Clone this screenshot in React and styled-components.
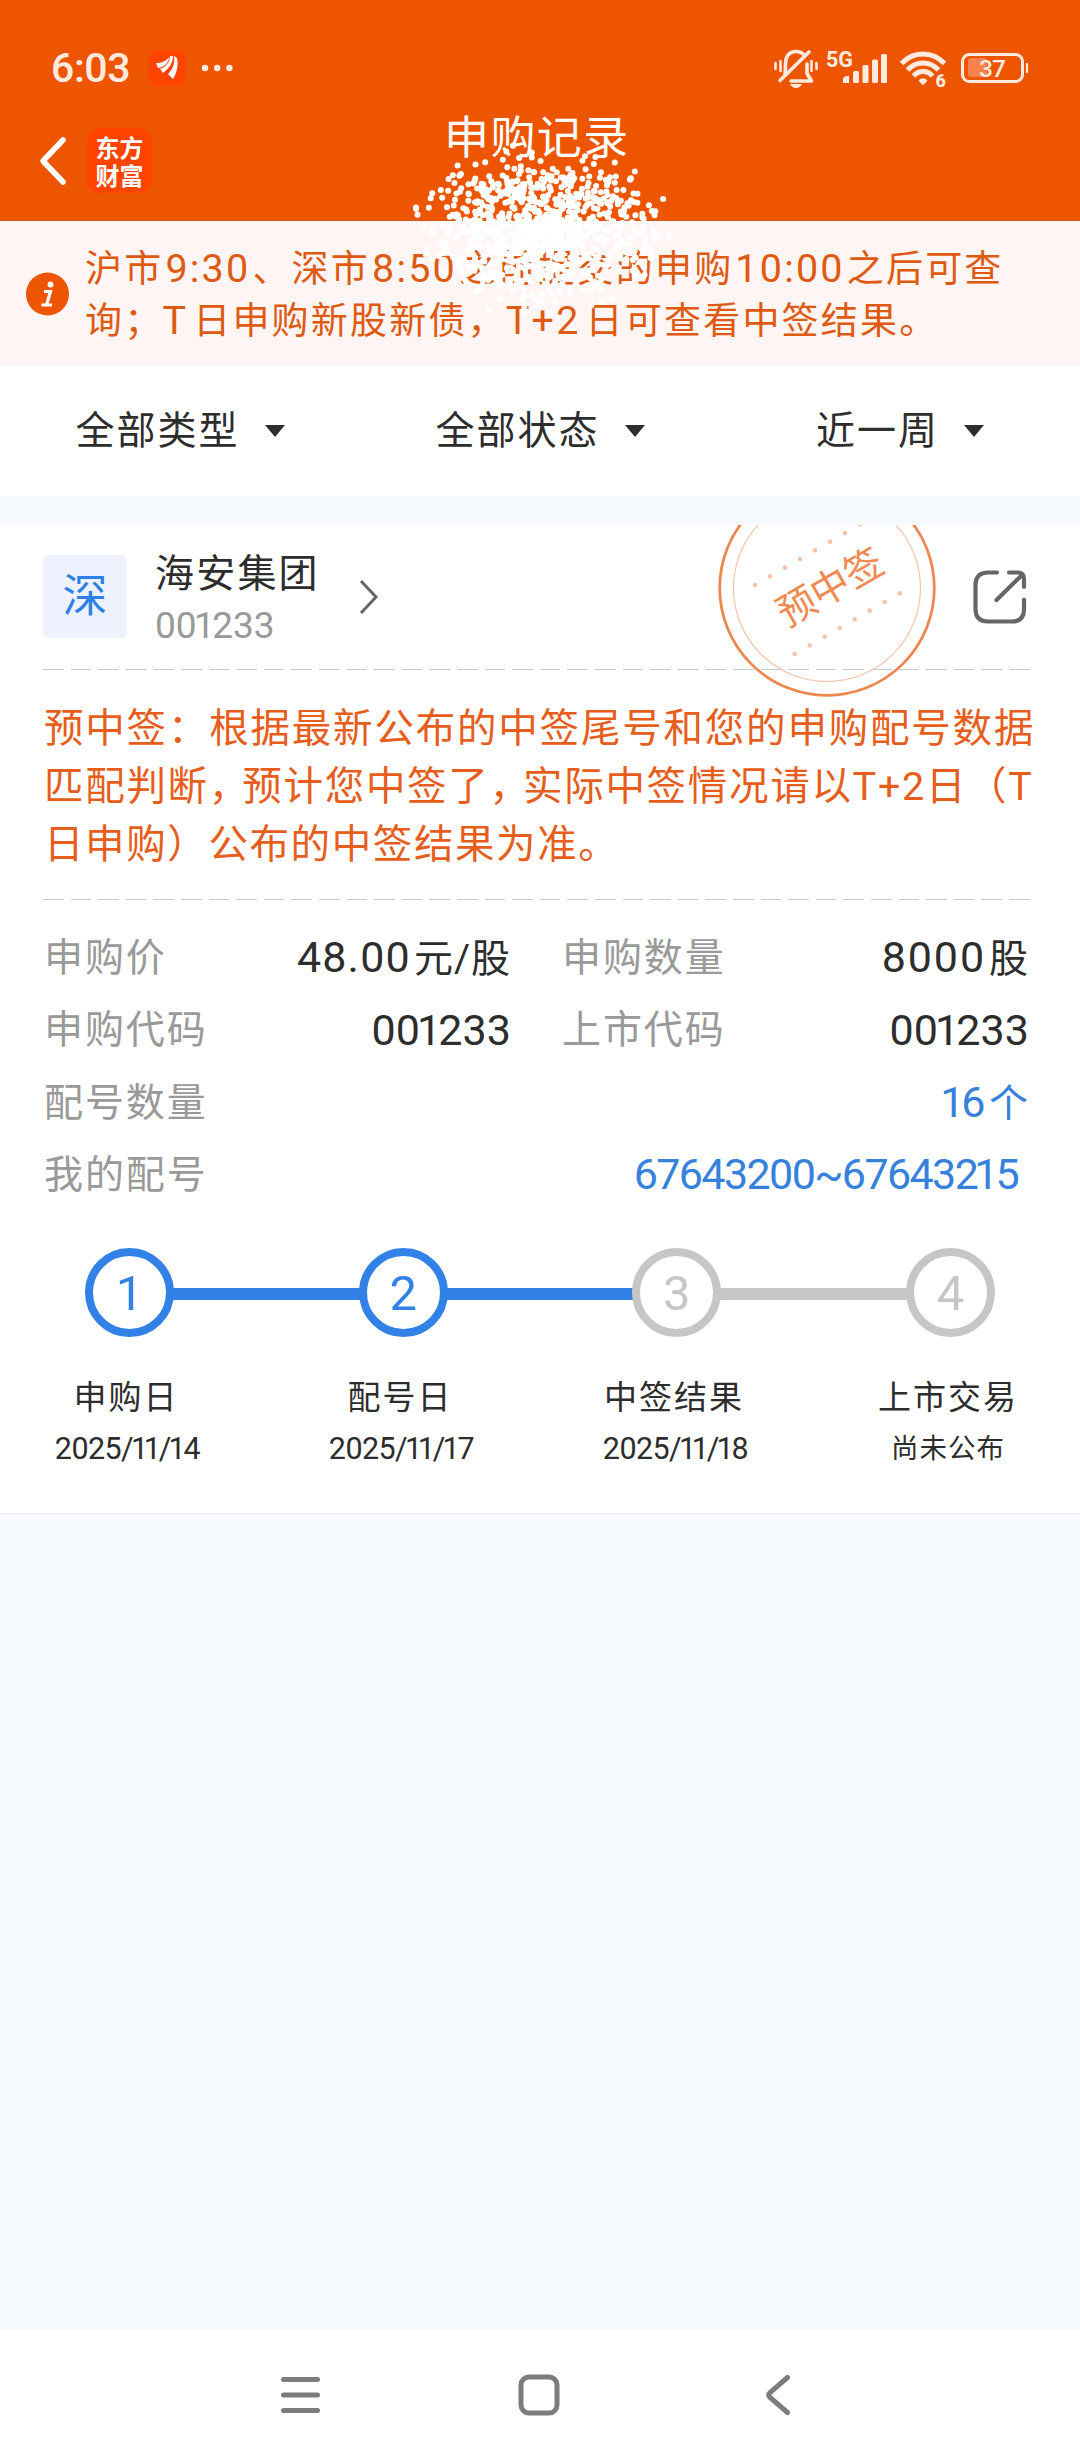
import React from 'react'
import styled, { createGlobalStyle, css } from 'styled-components'

const GlobalStyle = createGlobalStyle`
  * {
    box-sizing: border-box;
  }
  body {
    margin: 0;
    background: #f6faff;
    font-family: Roboto, 'Noto Sans CJK SC', sans-serif;
    line-height: 1.25;
    color: #2d2d2d;
  }
  svg {
    display: block;
    flex-shrink: 0;
  }
`

const centerItem = css`
  display: flex;
  align-items: center;
  justify-content: center;
`

const Page = styled.div`
  position: relative;
  display: flex;
  flex-direction: column;
  width: 1080px;
  height: 2460px;
  overflow: hidden;
`

/* header */
const Header = styled.header`
  height: 221px;
  padding-top: 40px;
  background: #ee5500;
  border-bottom: 1px solid #cf5a1c;
  color: #fff;
`

const StatusBar = styled.div`
  display: flex;
  align-items: center;
  height: 56px;
  padding: 0 52px 0 51px;
  color: #ffeadf;
`

const Clock = styled.div`
  width: 98px;
  font-size: 41px;
  font-weight: 500;
  letter-spacing: -0.4px;
  line-height: 56px;
`

const AppBadge = styled.div`
  ${centerItem};
  width: 36px;
  height: 36px;
  margin-right: 16px;
  border-radius: 7px;
  background: #ff4400;
`

const StatusRight = styled.div`
  display: flex;
  align-items: center;
  margin-left: auto;
`

const TitleBar = styled.div`
  display: flex;
  align-items: flex-start;
  height: 124px;
  padding: 32px 0 0 38px;
`

const BackIcon = styled.svg`
  margin: 8px 19px 0 0;
`

const Logo = styled.div`
  ${centerItem};
  flex-direction: column;
  width: 65px;
  height: 65px;
  border-radius: 13px;
  background: #ff4400;
  font-family: 'Noto Sans CJK SC', sans-serif;
  font-size: 24px;
  font-weight: 700;
  line-height: 28px;
`

const Title = styled.h1`
  width: 190px;
  margin: -16px 0 0 292px;
  font-size: 45px;
  font-weight: 400;
  letter-spacing: 1.4px;
  line-height: 54px;
  white-space: nowrap;
`

const Sparkle = styled.svg`
  position: absolute;
  top: 140px;
  left: 396px;
`

/* notice */
const Notice = styled.section`
  display: flex;
  align-items: center;
  height: 145px;
  padding-left: 26px;
  background: #fff5f5;
`

const NoticeText = styled.div`
  margin-left: 16px;
  padding-top: 4px;
  font-size: 37px;
  letter-spacing: 2.2px;
  line-height: 51.5px;
  color: #de5a10;
`

const Latin = styled.span`
  margin: 0 2px;
  font-size: 39.5px;
  line-height: 1;
`

const LatinLetters = styled(Latin)`
  margin: 0 5px 0 -1px;
`

const Line = styled.div`
  white-space: nowrap;
  letter-spacing: ${(props) => props.$track};
`

const Tight = styled.span`
  letter-spacing: -6px;
`

/* filters */
const Filters = styled.nav`
  display: grid;
  grid-template-columns: repeat(3, 1fr);
  height: 130px;
  background: #fff;
`

const Filter = styled.div`
  ${centerItem};
  gap: 25px;
  font-size: 39px;
  letter-spacing: 2px;
`

const Caret = styled.span`
  border: 10px solid transparent;
  border-top: 12px solid #2d2d2d;
  border-bottom: 0;
`

/* card */
const Card = styled.main`
  position: relative;
  height: 989px;
  margin-top: 29px;
  padding: 0 50px 0 43px;
  overflow: hidden;
  background: #fff;
  border-bottom: 1px solid #ececf0;
`

const StockHead = styled.div`
  display: flex;
  align-items: center;
  height: 144px;
`

const Market = styled.div`
  ${centerItem};
  width: 84px;
  height: 83px;
  margin-top: -1px;
  padding-top: 2px;
  border-radius: 6px;
  background: #edf2fe;
  color: #2f80e4;
  font-size: 45px;
`

const StockName = styled.div`
  width: 204px;
  margin: 3px 0 0 28px;
  font-size: 39px;
  letter-spacing: 2.2px;
  line-height: 54px;
`

const StockCode = styled.div`
  font-size: 37px;
  letter-spacing: 0;
  line-height: 49px;
  color: #999;
`

const ShareIcon = styled.svg`
  margin: 0 3px 0 auto;
`

const Stamp = styled.svg`
  position: absolute;
  top: -47px;
  left: 717px;
`

const Divider = styled.div`
  height: 1px;
  background: repeating-linear-gradient(90deg, #c9c9c9 0 20.6px, transparent 20.6px 27.6px);
`

const Tip = styled.div`
  height: 229px;
  padding: 30px 0 0 1px;
  font-size: 39.5px;
  line-height: 58px;
  color: #e65d1c;
`

const Details = styled.div`
  display: grid;
  grid-template-columns: 464px 464px;
  grid-auto-rows: 72.4px;
  column-gap: 54px;
  padding: 22px 0 0 1px;
`

const Detail = styled.div`
  display: flex;
  align-items: center;
  justify-content: space-between;
  grid-column: ${(props) => (props.$wide ? '1 / -1' : 'auto')};
  padding-right: ${(props) => props.$inset || 0}px;
`

const Label = styled.span`
  font-size: 39px;
  letter-spacing: 1.9px;
  color: #999;
`

const Value = styled.span`
  margin-right: -3px;
  font-size: 43px;
  letter-spacing: ${(props) => props.$track || 0}px;
  color: ${(props) => (props.$link ? '#3581dc' : '#2d2d2d')};
  small {
    margin-left: 3px;
    font-size: 39px;
    letter-spacing: 1px;
  }
`

const Ones = styled.span`
  margin: 0 0.07em 0 -0.07em;
  letter-spacing: -0.14em;
`

/* steps */
const Track = styled.div`
  display: flex;
  align-items: center;
  height: 89px;
  margin: 36px -8px 0 42px;
  padding-right: 43px;
`

const stepColor = (props) => (props.$done ? '#3181e6' : '#c6c6c6')

const Dot = styled.div`
  ${centerItem};
  width: 89px;
  height: 89px;
  padding-top: 3px;
  border: 8.5px solid ${stepColor};
  border-radius: 50%;
  color: ${stepColor};
  font-size: 49px;
`

const Bar = styled.div`
  flex: 1;
  height: 12px;
  margin: 3px -1px 0;
  background: ${stepColor};
`

const StepTexts = styled.div`
  display: flex;
  justify-content: space-between;
  margin: 36px -8px 0 -7px;
`

const StepText = styled.div`
  width: 180px;
  text-align: center;
`

const StepName = styled.div`
  font-size: 33px;
  letter-spacing: 2px;
  line-height: 50px;
  white-space: nowrap;
`

const StepDate = styled.div`
  padding-left: ${(props) => (props.$text ? 0 : 3)}px;
  font-size: ${(props) => (props.$text ? 27.5 : 30.5)}px;
  letter-spacing: ${(props) => (props.$text ? 1 : -0.6)}px;
  line-height: 51px;
  white-space: nowrap;
`

/* system navigation */
const NavBar = styled.footer`
  display: flex;
  align-items: center;
  height: 130px;
  margin-top: auto;
  padding: 0 289px 0 281px;
  justify-content: space-between;
  background: #fff;
`

const HomeIcon = styled.svg`
  margin-right: 7px;
`

// "1" is set narrower than the other figures
const Num = ({ children }) =>
  children.split(/(1+)/).map((part, i) => (i % 2 ? <Ones key={i}>{part}</Ones> : part))

const makeDots = (count) => {
  let seed = 7
  const rand = () => {
    seed = (seed * 16807) % 2147483647
    return seed / 2147483647
  }
  return Array.from({ length: count }, () => {
    const angle = rand() * Math.PI * 2
    const r = Math.pow(rand(), 0.85) * (0.66 + rand() * 0.4)
    return [145 + Math.cos(angle) * r * 130, 90 + Math.sin(angle) * r * 83]
  })
}

const dots = makeDots(1000)

const steps = [
  { name: '申购日', date: '2025/11/14', done: true },
  { name: '配号日', date: '2025/11/17', done: true },
  { name: '中签结果', date: '2025/11/18' },
  { name: '上市交易', date: '尚未公布', text: true },
]

const stampDots = [0, 1, 2, 3, 4, 5, 6, 7]

export default function App() {
  return (
    <>
      <GlobalStyle />
      <Page>
        <Header>
          <StatusBar>
            <Clock>6:03</Clock>
            <AppBadge>
              <svg width="24" height="26" viewBox="0 0 24 26" fill="#fff">
                <path d="M1 8C7 8 11 6 14 2C14 8 9 12 3 13Z" />
                <path d="M15 1L18 1C18 9 13 14 8 18L5 14C11 12 15 7 15 1Z" />
                <path d="M19 1L22 3C24 11 21 19 18 24L13 19C18 14 20 8 19 1Z" />
              </svg>
            </AppBadge>
            <svg width="32" height="8" fill="currentColor">
              <circle cx="4" cy="4" r="3.2" />
              <circle cx="16.2" cy="4" r="3.2" />
              <circle cx="28.4" cy="4" r="3.2" />
            </svg>
            <StatusRight>
              <svg width="254" height="44" viewBox="773 46 254 44" fill="currentColor">
                <g fill="none" stroke="currentColor" strokeWidth="3.6" strokeLinecap="round">
                  <path d="M784 74Q784.500 71 784.500 65C784.500 55 789 51.500 795 51.500C798 51.500 800.500 52.500 802 54" />
                  <path d="M790 81H810.500L806 73.500V64" strokeLinejoin="round" />
                  <path d="M779 80.500L808 52" />
                  <path d="M774.500 63V69M779.500 61V71M810.500 61V71M815.500 63V69" strokeWidth="2.6" />
                </g>
                <path d="M789 84H801Q799 88 795 88Q791 88 789 84Z" />
                <text x="825" y="66.500" fontSize="21.500" fontWeight="700">5G</text>
                <path d="M842 83V79Q842 77 844 76.500L848 75.500V83Z" />
                <rect x="852" y="71" width="6" height="12" rx="1.500" />
                <rect x="861.500" y="65" width="6" height="18" rx="1.500" />
                <rect x="871" y="59.500" width="6" height="23.500" rx="1.500" />
                <rect x="880" y="54" width="6" height="29" rx="1.500" />
                <g fill="none" stroke="currentColor" strokeWidth="5">
                  <path d="M900.500 63.500Q909.500 54 922 54Q934.500 54 943.500 63.500" />
                  <path d="M906.500 70Q913 63 922 63Q931 63 937.500 70" />
                  <path d="M912.500 76Q916.500 71.500 922 71.500Q927.500 71.500 931.500 76" />
                </g>
                <path d="M917.500 80.500Q922 76 926.500 80.500L923.500 84Q922 85.500 920.500 84Z" />
                <text x="934.500" y="86.500" fontSize="18" fontWeight="800">6</text>
                <rect x="967" y="58" width="19" height="19" rx="3" fill="#f8814d" />
                <rect x="961.500" y="54.500" width="60" height="27" rx="7" fill="none" stroke="currentColor" strokeWidth="3" />
                <path d="M1025 63Q1029 63 1029 67V69Q1029 73 1025 73Z" />
                <text x="978" y="77" fontSize="24.500" fontWeight="500" letterSpacing="-1">37</text>
              </svg>
            </StatusRight>
          </StatusBar>
          <TitleBar>
            <BackIcon width="30" height="50" viewBox="0 0 30 50">
              <path d="M25 4L5 25L25 46" fill="none" stroke="#fff" strokeWidth="5.5" strokeLinecap="round" strokeLinejoin="round" />
            </BackIcon>
            <Logo>
              <div>东方</div>
              <div>财富</div>
            </Logo>
            <Title>申购记录</Title>
          </TitleBar>
        </Header>

        <Notice>
          <svg width="43" height="44" viewBox="0 0 43 44">
            <circle cx="21.500" cy="22" r="21.500" fill="#ee5500" />
            <circle cx="24.500" cy="12.500" r="3" fill="#fff" />
            <path d="M18 19.500H24.500L20.500 33M15.500 33H26" fill="none" stroke="#fff" strokeWidth="3.200" />
          </svg>
          <NoticeText>
            <Line>
              沪市<Latin>9:30</Latin>、深市<Latin>8:50</Latin>之前提交的申购<Latin>10:00</Latin>之后可查
            </Line>
            <Line>
              询；<LatinLetters>T</LatinLetters>日申购新股新债，<LatinLetters>T+2</LatinLetters>日可查看中签结果。
            </Line>
          </NoticeText>
        </Notice>

        <Filters>
          {['全部类型', '全部状态', '近一周'].map((item) => (
            <Filter key={item}>
              {item}
              <Caret />
            </Filter>
          ))}
        </Filters>

        <Card>
          <StockHead>
            <Market>深</Market>
            <StockName>
              海安集团
              <StockCode>
                <Num>001233</Num>
              </StockCode>
            </StockName>
            <svg width="20" height="36" viewBox="0 0 20 36">
              <path d="M2 2L17 18L2 34" fill="none" stroke="#666" strokeWidth="3" />
            </svg>
            <ShareIcon width="54" height="54" viewBox="0 0 54 54" fill="none" stroke="#666" strokeWidth="4.200" strokeLinecap="round">
              <path d="M24 2.500H15Q2.500 2.500 2.500 15V39Q2.500 51.500 15 51.500H39Q51 51.500 51 39V29.500" />
              <path d="M36 2.500H45Q51 2.500 51 9V17M49 5L23.500 30" />
            </ShareIcon>
          </StockHead>
          <Divider />
          <Tip>
            <Line $track="1.8px">预中签：根据最新公布的中签尾号和您的申购配号数据</Line>
            <Line $track="1.7px">
              匹配判断<Tight>，</Tight>预计您中签了<Tight>，</Tight>实际中签情况请以T+2日（T
            </Line>
            <Line $track="1.6px">日申购）公布的中签结果为准。</Line>
          </Tip>
          <Divider />
          <Details>
            <Detail>
              <Label>申购价</Label>
              <Value $track={1.2}>
                48.00<small>元/股</small>
              </Value>
            </Detail>
            <Detail>
              <Label>申购数量</Label>
              <Value $track={1.9}>
                8000<small>股</small>
              </Value>
            </Detail>
            <Detail>
              <Label>申购代码</Label>
              <Value $track={0.1}>
                <Num>001233</Num>
              </Value>
            </Detail>
            <Detail>
              <Label>上市代码</Label>
              <Value $track={0.1}>
                <Num>001233</Num>
              </Value>
            </Detail>
            <Detail $wide>
              <Label>配号数量</Label>
              <Value $link $track={0.5}>
                <Num>16</Num>
                <small>个</small>
              </Value>
            </Detail>
            <Detail $wide $inset={11}>
              <Label>我的配号</Label>
              <Value $link $track={-1.6}>
                <Num>67643200~67643215</Num>
              </Value>
            </Detail>
          </Details>
          <Track>
            {steps.map((step, index) => (
              <React.Fragment key={step.name}>
                {index > 0 && <Bar $done={steps[index - 1].done} />}
                <Dot $done={step.done}>{index + 1}</Dot>
              </React.Fragment>
            ))}
          </Track>
          <StepTexts>
            {steps.map((step) => (
              <StepText key={step.name}>
                <StepName>{step.name}</StepName>
                <StepDate $text={step.text}>
                  <Num>{step.date}</Num>
                </StepDate>
              </StepText>
            ))}
          </StepTexts>
          <Stamp width="220" height="220" viewBox="-110 -110 220 220">
            <circle r="107.300" fill="none" stroke="#ec8750" strokeWidth="2.800" />
            <circle r="93.500" fill="none" stroke="#f4c3a8" strokeWidth="1.200" />
            {stampDots.map((i) => (
              <g key={i} fill="#f6c3aa">
                <circle cx={-72 + i * 15} cy={-3 - i * 8.67} r="2.300" />
                <circle cx={-32.300 + i * 15} cy={66 - i * 8.67} r="2.300" />
              </g>
            ))}
            <text transform="translate(3 -1) rotate(-30)" y="14" textAnchor="middle" fontSize="38.500" fill="#f08a52">
              预中签
            </text>
          </Stamp>
        </Card>

        <NavBar>
          <svg width="39" height="42" viewBox="0 0 39 42" stroke="#7c7b7d" strokeWidth="5" strokeLinecap="round">
            <path d="M2.500 5.500H36.500M2.500 21H36.500M2.500 36.500H36.500" />
          </svg>
          <HomeIcon width="42" height="42" viewBox="0 0 42 42">
            <rect x="3" y="3" width="36" height="36" rx="8" fill="none" stroke="#7c7b7d" strokeWidth="5" />
          </HomeIcon>
          <svg width="26" height="42" viewBox="0 0 26 42">
            <path d="M22.500 3.500L5 18.500Q2.500 21 5 23.500L22.500 38.500" fill="none" stroke="#7c7b7d" strokeWidth="5" strokeLinecap="round" />
          </svg>
        </NavBar>

        <Sparkle width="290" height="180" fill="#fff">
          {dots.map(([x, y], i) => (
            <circle key={i} cx={x} cy={y} r="3" />
          ))}
        </Sparkle>
      </Page>
    </>
  )
}
